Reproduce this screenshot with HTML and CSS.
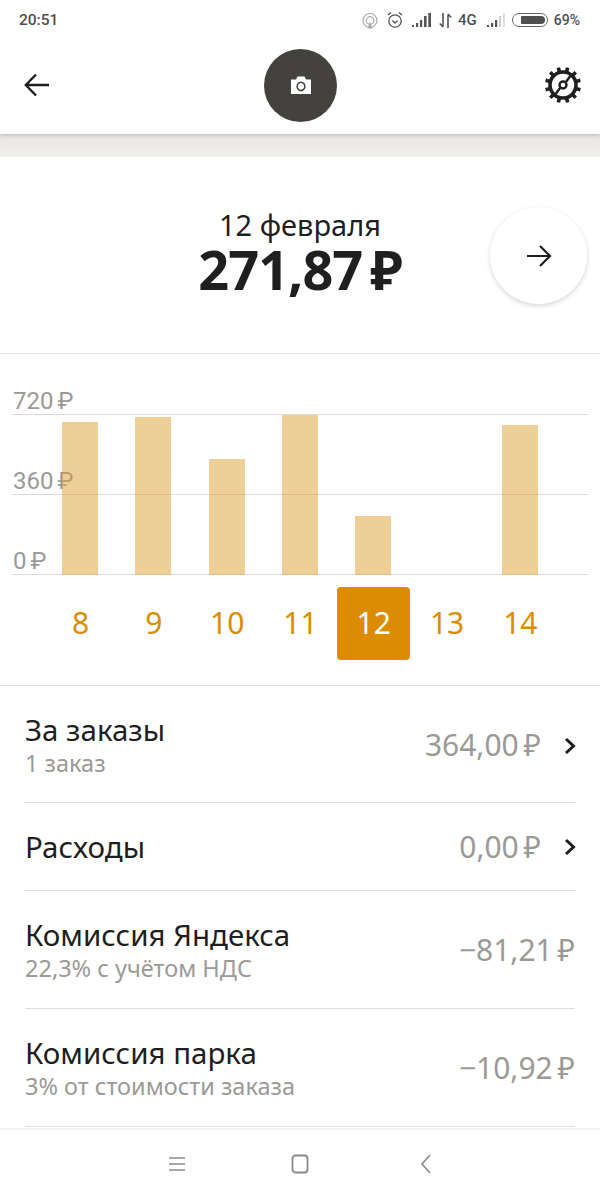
FILE: index.html
```html
<!DOCTYPE html>
<html>
<head>
    <title>Заработок за день</title>
    <link rel="stylesheet" href="styles.css">
</head>
<body>
    <div class="phone">
        <div class="status-bar">
            <span class="status-time">20:51</span>
            <div class="status-icons">
                <svg width="16" height="17" viewBox="0 0 16 17" fill="none" stroke="#aaa" stroke-width="1.2"><circle cx="8" cy="8.500" r="7"/><circle cx="8" cy="8.500" r="3.800"/><path d="M6.500 16l1.500-4.500L9.500 16z" fill="#aaa"/></svg>
                <svg class="icon-alarm" width="16" height="18" viewBox="0 0 16 18" fill="none" stroke="#555" stroke-width="1.3"><circle cx="8" cy="10" r="6.200"/><path d="M5.400 9.500L8 12l2.600-2.500M1 4l3-2.600M15 4l-3-2.600"/></svg>
                <svg class="icon-signal" width="19" height="14" viewBox="0 0 19 14" fill="#555"><rect x="0" y="12" width="2" height="2"/><rect x="4" y="10" width="2.200" height="4"/><rect x="8" y="7" width="2.200" height="7"/><rect x="12" y="3" width="2.600" height="11"/><rect x="16.300" y="0" width="2.700" height="14"/></svg>
                <svg class="icon-arrows" width="13" height="15" viewBox="0 0 13 15" fill="none" stroke="#555" stroke-width="1.600"><path d="M4 0v13.500M0.800 10.500L4 14M9 15V1.500M9 1l3.200 3.500"/></svg>
                <span class="status-net">4G</span>
                <svg class="icon-signal2" width="18" height="14" viewBox="0 0 18 14" fill="#555"><rect x="0" y="12" width="2" height="2"/><rect x="4" y="10" width="2.200" height="4"/><rect x="8" y="7" width="2.200" height="7"/><rect x="12" y="3" width="2" height="11" fill="#ccc"/><rect x="16" y="0" width="2" height="14" fill="#ddd"/></svg>
                <div class="battery"><div class="battery-level"></div></div>
                <span class="status-percent">69%</span>
            </div>
        </div>

        <header class="toolbar">
            <svg class="back-icon" width="28" height="28" viewBox="0 0 28 28" fill="none" stroke="#1f1f1f" stroke-width="2.400"><path d="M26 14H3M13 3.500L2.800 14 13 24.500"/></svg>
            <div class="camera-btn">
                <svg width="22" height="20" viewBox="0 0 22 20"><path fill="#fff" fill-rule="evenodd" d="M1 4.500h5L7.500 1.500h7L16 4.500h5V19H1zM11 6.500a4.600 4.900 0 1 0 .01 0zM11 8a3.100 3.400 0 1 1-.01 0z"/></svg>
            </div>
            <svg class="gear-icon" width="38" height="38" viewBox="0 0 38 38" fill="none" stroke="#1f1f1f">
                <circle cx="19" cy="19" r="13" stroke-width="3.600"/>
                <g stroke-width="3.600">
                    <path transform="rotate(15 19 19)" d="M19 1v5M19 32v5M1 19h5M32 19h5"/>
                    <path transform="rotate(45 19 19)" d="M19 1v5M19 32v5M1 19h5M32 19h5"/>
                    <path transform="rotate(75 19 19)" d="M19 1v5M19 32v5M1 19h5M32 19h5"/>
                </g>
                <circle cx="19" cy="19" r="3.500" stroke-width="2.400"/>
                <path d="M22 16l5-7M16 22l-5 7" stroke-width="2.400"/>
            </svg>
        </header>
        <div class="toolbar-shadow"></div>

        <section class="summary">
            <div class="summary-text">
                <div class="summary-date">12 февраля</div>
                <div class="summary-total">271,87 ₽</div>
            </div>
            <div class="next-btn">
                <svg width="26" height="24" viewBox="0 0 26 24" fill="none" stroke="#1f1f1f" stroke-width="2.200"><path d="M1 12h23M14 2l10 10-10 10"/></svg>
            </div>
        </section>

        <section class="chart">
            <div class="chart-plot">
                <div class="grid-line line-top"><span>720 ₽</span></div>
                <div class="grid-line line-mid"><span>360 ₽</span></div>
                <div class="grid-line line-bottom"><span>0 ₽</span></div>
                <div class="bars">
                    <div class="bar-slot"><div class="bar" style="height: 153px"></div></div>
                    <div class="bar-slot"><div class="bar" style="height: 158px"></div></div>
                    <div class="bar-slot"><div class="bar" style="height: 116px"></div></div>
                    <div class="bar-slot"><div class="bar" style="height: 160px"></div></div>
                    <div class="bar-slot"><div class="bar" style="height: 59px"></div></div>
                    <div class="bar-slot"></div>
                    <div class="bar-slot"><div class="bar" style="height: 150px"></div></div>
                </div>
            </div>
            <div class="days">
                <div class="day">8</div>
                <div class="day">9</div>
                <div class="day">10</div>
                <div class="day">11</div>
                <div class="day day-active">12</div>
                <div class="day">13</div>
                <div class="day">14</div>
            </div>
        </section>

        <section class="rows">
            <div class="row row-tall row-first">
                <div class="row-text">
                    <div class="row-title">За заказы</div>
                    <div class="row-sub">1 заказ</div>
                </div>
                <div class="row-value has-chevron">364,00 ₽</div>
                <svg class="chevron" width="14" height="20" viewBox="0 0 14 20" fill="none" stroke="#1f1f1f" stroke-width="3"><path d="M3 3l7.500 7L3 17"/></svg>
            </div>
            <div class="row row-short">
                <div class="row-text">
                    <div class="row-title">Расходы</div>
                </div>
                <div class="row-value has-chevron">0,00 ₽</div>
                <svg class="chevron" width="14" height="20" viewBox="0 0 14 20" fill="none" stroke="#1f1f1f" stroke-width="3"><path d="M3 3l7.500 7L3 17"/></svg>
            </div>
            <div class="row row-tall">
                <div class="row-text">
                    <div class="row-title">Комиссия Яндекса</div>
                    <div class="row-sub">22,3% с учётом НДС</div>
                </div>
                <div class="row-value">−81,21 ₽</div>
            </div>
            <div class="row row-tall">
                <div class="row-text">
                    <div class="row-title">Комиссия парка</div>
                    <div class="row-sub">3% от стоимости заказа</div>
                </div>
                <div class="row-value">−10,92 ₽</div>
            </div>
        </section>

        <nav class="nav-bar">
            <svg width="18" height="16" viewBox="0 0 18 16" fill="none" stroke="#8a8a8a" stroke-width="1.600"><path d="M1 2h16M1 8h16M1 14h16"/></svg>
            <svg width="18" height="20" viewBox="0 0 18 20" fill="none" stroke="#8a8a8a" stroke-width="1.800"><rect x="1.500" y="1.500" width="15" height="17" rx="3"/></svg>
            <svg class="nav-back" width="12" height="20" viewBox="0 0 12 20" fill="none" stroke="#8a8a8a" stroke-width="1.600"><path d="M10 1L2 10l8 9"/></svg>
        </nav>
    </div>
</body>
</html>
```

FILE: styles.css
```css
* {
    box-sizing: border-box;
}

body {
    margin: 0;
    padding: 0;
    background-color: #fff;
    font-family: "Noto Sans", "Open Sans", sans-serif;
    color: #1f1f1f;
}

.phone {
    width: 600px;
    height: 1200px;
    overflow: hidden;
    display: flex;
    flex-direction: column;
}

/* status bar */
.status-bar {
    height: 38px;
    padding: 2px 20px 0 19px;
    display: flex;
    align-items: center;
    justify-content: space-between;
    font-family: "Roboto", sans-serif;
    font-size: 14px;
    font-weight: 500;
    color: #505050;
    background-color: #fff;
    position: relative;
    z-index: 2;
}

.status-time {
    font-size: 15.5px;
}

.status-icons {
    display: flex;
    align-items: center;
    gap: 9px;
}

.status-net {
    font-size: 15px;
    margin-left: -3px;
    margin-right: 1px;
}

.icon-arrows {
    margin-left: -1px;
}

.icon-signal2 {
    margin-right: -2px;
}

.battery {
    width: 36px;
    height: 14px;
    border: 1px solid #666;
    border-radius: 7px;
    padding: 2px;
    display: flex;
    justify-content: flex-end;
}

.battery-level {
    width: 24px;
    background-color: #505050;
    border-radius: 1px 4px 4px 1px;
}

.status-percent {
    margin-left: -3px;
}

/* toolbar */
.toolbar {
    height: 96px;
    padding: 0 18px 0 23px;
    display: flex;
    align-items: center;
    justify-content: space-between;
    background-color: #fff;
    position: relative;
    z-index: 1;
    box-shadow: 0 1px 4px rgba(0, 0, 0, 0.22);
}

.back-icon {
    margin-top: -2px;
    margin-right: 6px;
}

.camera-btn {
    width: 73px;
    height: 73px;
    border-radius: 50%;
    background-color: #43423e;
    display: flex;
    align-items: center;
    justify-content: center;
    margin-top: -2px;
}

.gear-icon {
    margin-top: -2px;
}

.toolbar-shadow {
    height: 23px;
    background: linear-gradient(#e8e7e3, #f0efeb);
}

/* date and total */
.summary {
    height: 197px;
    padding-right: 11px;
    border-bottom: 1px solid #dfdedb;
    position: relative;
    display: flex;
    align-items: center;
    justify-content: center;
}

.summary-text {
    text-align: center;
    margin-top: -4px;
}

.summary-date {
    font-size: 29px;
    line-height: 32px;
    margin-left: 11px;
}

.summary-total {
    font-size: 54px;
    line-height: 56px;
    font-weight: 700;
    letter-spacing: -1px;
    word-spacing: -5px;
    margin-left: 11px;
}

.next-btn {
    position: absolute;
    right: 13px;
    top: 50px;
    width: 97px;
    height: 97px;
    border-radius: 50%;
    background-color: #fff;
    box-shadow: 0 2px 5px rgba(0, 0, 0, 0.16);
    display: flex;
    align-items: center;
    justify-content: center;
}

/* chart */
.chart {
    height: 332px;
    border-bottom: 1px solid #dfdedb;
    padding-top: 60px;
}

.chart-plot {
    height: 161px;
    position: relative;
}

.grid-line {
    position: absolute;
    left: 12px;
    right: 12px;
    height: 1px;
    background-color: #dcdbd7;
}

.grid-line span {
    position: absolute;
    left: 1px;
    bottom: -1px;
    font-size: 24px;
    line-height: 30px;
    word-spacing: -2px;
    color: #9b9a96;
    font-family: "Roboto", sans-serif;
}

.line-top {
    top: 0;
}

.line-mid {
    top: 80px;
}

.line-bottom {
    top: 160px;
}

.bars {
    position: absolute;
    left: 43px;
    right: 43px;
    top: 0;
    bottom: 0;
    display: flex;
    align-items: flex-end;
}

.bar-slot {
    flex: 1;
    display: flex;
    justify-content: center;
}

.bar {
    width: 36px;
    background-color: rgba(222, 160, 50, 0.5);
}

.days {
    display: flex;
    padding: 12px 43px 0 44px;
}

.day {
    flex: 1;
    height: 73px;
    padding-bottom: 2px;
    display: flex;
    align-items: center;
    justify-content: center;
    font-size: 30px;
    color: #dc8c00;
}

.day-active {
    background-color: #dc8c00;
    color: #fff;
    border-radius: 4px;
}

/* rows */
.rows {
    padding: 0 25px;
    flex: 1;
}

.row {
    display: flex;
    align-items: center;
    border-bottom: 1px solid #dfdedb;
}

.row-tall {
    height: 118px;
    padding-top: 3px;
}

.row-first {
    height: 117px;
}

.row-short {
    height: 88px;
}

.row-text {
    flex: 1;
}

.row-title {
    font-size: 29.5px;
    line-height: 34px;
}

.row-sub {
    font-size: 23.5px;
    line-height: 32px;
    color: #9b9a96;
}

.row-value {
    font-size: 30px;
    word-spacing: -3px;
    color: #9b9a96;
    margin-top: -3px;
}

.row-short .row-value {
    margin-top: 0;
}

.has-chevron {
    margin-right: 22px;
}

.chevron {
    margin-right: -2px;
}

/* android nav */
.nav-bar {
    height: 72px;
    flex-shrink: 0;
    display: flex;
    align-items: center;
    justify-content: center;
    gap: 105px;
    border-top: 2px solid #f3f3f1;
    padding-bottom: 2px;
}

.nav-back {
    margin-left: 6px;
}
```
